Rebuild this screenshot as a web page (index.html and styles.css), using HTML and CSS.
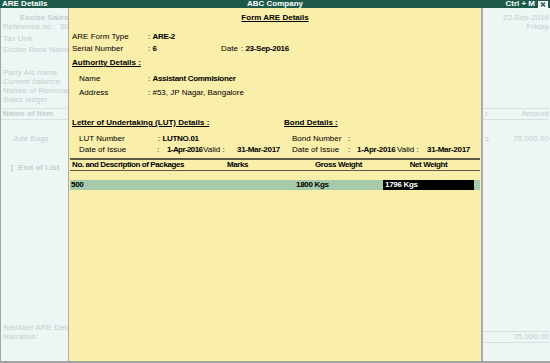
FILE: index.html
```html
<!DOCTYPE html>
<html lang="en">
<head>
  <meta charset="UTF-8" />
  <title>ARE Details</title>
  <link rel="stylesheet" href="styles.css">
</head>
<body>
  <div class="titlebar">
    <span class="tb-left">ARE Details</span>
    <span class="tb-center">ABC Company</span>
    <span class="tb-right">Ctrl + M
      <svg class="close" width="10" height="7" viewBox="0 0 10 7">
        <rect x="0.5" y="0.5" width="9" height="6" fill="#e8eeee" stroke="#fff"/>
        <path d="M3 1.5 L7 5.5 M7 1.5 L3 5.5" stroke="#1d5a4a" stroke-width="1.2"/>
      </svg>
    </span>
  </div>

  <div class="screen">
    <!-- faded voucher behind the popup -->
    <div class="side side-left">
      <div class="faint bold center" style="margin-top:5px">Excise Sales</div>
      <div class="faint">Reference no.:&nbsp; 500</div>
      <div class="faint" style="margin-top:3px">Tax Unit</div>
      <div class="faint" style="margin-top:2px">Excise Book Name:</div>
      <div class="faint" style="margin-top:14px">Party A/c name</div>
      <div class="faint"><i>Current balance</i></div>
      <div class="faint">Nature of Removal</div>
      <div class="faint">Sales ledger</div>
      <div class="faint bold ruled" style="margin-top:4px">Name of Item</div>
      <div class="faint indent" style="margin-top:14px">Jute Bags</div>
      <div class="faint bold eol" style="margin-top:20px">[&nbsp; End of List</div>
      <div class="side-bottom">
        <div class="faint">Set/Alter ARE Details</div>
        <div class="faint">Narration:</div>
      </div>
    </div>

    <div class="panel">
      <div class="heading"><span class="u">Form ARE Details</span></div>

      <div class="row" style="margin-top:9px">
        <span class="lbl">ARE Form Type</span><span>: <b>ARE-2</b></span>
      </div>
      <div class="row" style="margin-top:2px">
        <span class="lbl">Serial Number</span><span class="w73">: <b>6</b></span>
        <span class="w20">Date</span><span>: <b>23-Sep-2016</b></span>
      </div>

      <div class="row bold" style="margin-top:4px"><span class="u">Authority Details :</span></div>
      <div class="row sub tall" style="margin-top:4px">
        <span class="lbl2">Name</span><span>: <b>Assistant Commisioner</b></span>
      </div>
      <div class="row sub tall">
        <span class="lbl2">Address</span><span>: #53, JP Nagar, Bangalore</span>
      </div>

      <div class="split" style="margin-top:18px">
        <div class="lut">
          <div class="row bold"><span class="u">Letter of Undertaking (LUT) Details :</span></div>
          <div class="row sub" style="margin-top:6px">
            <span class="w79">LUT Number</span><span>: <b>LUTNO.01</b></span>
          </div>
          <div class="row sub" style="margin-top:1px">
            <span class="w78">Date of Issue</span><span class="w10">:</span>
            <b class="w36 tight">1-Apr-2016</b><span class="w34">Valid :</span><b>31-Mar-2017</b>
          </div>
        </div>
        <div class="bond">
          <div class="row bold"><span class="u">Bond Details :</span></div>
          <div class="row sub" style="margin-top:6px">
            <span class="w56">Bond Number</span><span>:</span>
          </div>
          <div class="row sub" style="margin-top:1px">
            <span class="w56">Date of Issue</span><span class="w9">:</span>
            <b class="w40">1-Apr-2016</b><span class="w30">Valid :</span><b>31-Mar-2017</b>
          </div>
        </div>
      </div>

      <div class="table">
        <div class="thead">
          <span class="col narrow">No. and Description of Packages</span>
          <span class="col narrow marks">Marks</span>
          <span class="col narrow mid">Gross Weight</span>
          <span class="col narrow mid">Net Weight</span>
        </div>
        <div class="trow">
          <span class="col first">500</span>
          <span class="col"></span>
          <span class="col gross">1800 Kgs</span>
          <span class="col cursor">1796 Kgs</span>
        </div>
      </div>
    </div>

    <div class="side side-right">
      <div class="faint right" style="margin-top:5px">23-Sep-2016</div>
      <div class="faint right">Friday</div>
      <div class="faint ruled-light split-text" style="margin-top:77px"><span>r</span><span>Amount</span></div>
      <div class="faint split-text" style="margin-top:14px"><span>s</span><span>75,000.00</span></div>
      <div class="side-bottom">
        <div class="faint right ruled-light">75,000.00</div>
      </div>
    </div>
  </div>
</body>
</html>
```

FILE: styles.css
```css
body {
  margin: 0;
  width: 550px;
  height: 363px;
  overflow: hidden;
  font-family: "Liberation Sans", Arial, sans-serif;
  font-size: 8px;
  color: #000;
  background: #edf5f5;
}
b, .bold {
  font-weight: bold;
}
b {
  letter-spacing: -0.3px;
}
b.tight {
  letter-spacing: -0.6px;
}

/* title bar */
.titlebar {
  height: 8px;
  line-height: 8px;
  background: #1d5a4a;
  color: #fff;
  font-weight: bold;
  display: flex;
  align-items: center;
  position: relative;
  padding: 0 2px;
}
.tb-center {
  position: absolute;
  left: 0;
  right: 0;
  text-align: center;
}
.tb-right {
  margin-left: auto;
  display: flex;
  align-items: center;
  gap: 3px;
  position: relative;
}
.close {
  display: block;
}

/* screen columns */
.screen {
  display: flex;
  height: 353px;
  border-left: 1px solid #9fa5a5;
  border-bottom: 2px solid #9fa5a5;
}
.side {
  display: flex;
  flex-direction: column;
  overflow: hidden;
  white-space: nowrap;
  background: #edf5f5;
}
.side-left {
  width: 67px;
  border-right: 1px solid #a7adad;
}
.side-right {
  width: 66px;
  border-left: 2px solid #a7adad;
  padding-right: 1px;
}
.side-bottom {
  margin-top: auto;
  padding-bottom: 20px;
}
.side-right .side-bottom {
  padding-bottom: 18px;
}
.faint {
  color: #c6cfcf;
  line-height: 9px;
  padding-left: 2px;
}
.center {
  padding-left: 19px;
}
.right {
  text-align: right;
}
.indent {
  padding-left: 12px;
}
.eol {
  padding-left: 10px;
}
.ruled {
  border-top: 1px solid #dbe2e2;
  border-bottom: 1px solid #dbe2e2;
  line-height: 10px;
}
.ruled-light {
  border-top: 1px solid #d9dfdf;
  border-bottom: 1px solid #d9dfdf;
  line-height: 10px;
}
.split-text {
  display: flex;
  justify-content: space-between;
}

/* yellow popup */
.panel {
  width: 412px;
  background: #f9eeaa;
  white-space: nowrap;
}
.heading {
  margin-top: 5px;
  line-height: 10px;
  text-align: center;
  font-weight: bold;
}
.u {
  text-decoration: underline;
  text-underline-offset: 1px;
}
.row {
  display: flex;
  line-height: 10px;
  padding-left: 3px;
}
.row.tall {
  line-height: 14px;
}
.row.sub {
  padding-left: 10px;
}
.lbl {
  width: 76px;
}
.lbl2 {
  width: 69px;
}
.w9 { width: 9px; }
.w10 { width: 10px; }
.w20 { width: 20px; }
.w30 { width: 30px; }
.w34 { width: 34px; }
.w36 { width: 36px; }
.w40 { width: 40px; }
.w56 { width: 56px; }
.w73 { width: 73px; }
.w78 { width: 78px; }
.w79 { width: 79px; }
.w36, .w40 {
  flex-shrink: 0;
  overflow: hidden;
}

.split {
  display: flex;
}
.lut {
  width: 215px;
}
.bond .row {
  padding-left: 0;
}
.bond .row.sub {
  padding-left: 8px;
}

/* packages table */
.table {
  margin: 3px 1px 0;
}
.thead, .trow {
  display: grid;
  grid-template-columns: 155px 67px 89px 91px;
  padding-left: 2px;
  line-height: 10px;
  font-weight: bold;
}
.thead {
  border-top: 2px solid #5b5a48;
  border-bottom: 1px solid #5b5a48;
}
.narrow {
  letter-spacing: -0.4px;
}
.mid {
  text-align: center;
}
.trow {
  margin-top: 9px;
  background: #a6c9a9;
  letter-spacing: -0.3px;
}
.first {
  margin-left: -1px;
}
.gross {
  padding-left: 2px;
}
.cursor {
  background: #000;
  color: #fff;
  padding-left: 2px;
}
```
